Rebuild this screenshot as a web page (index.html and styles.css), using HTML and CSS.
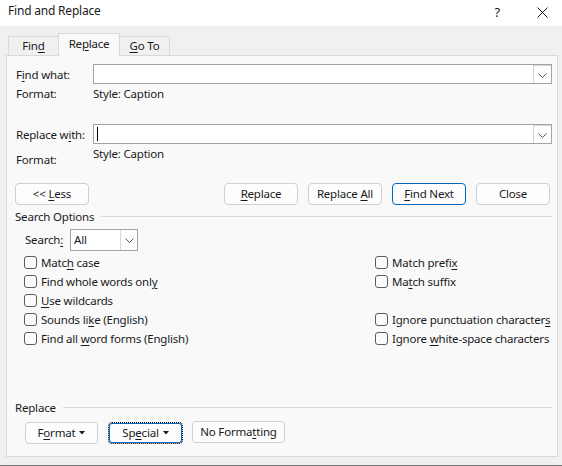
FILE: index.html
```html
<!DOCTYPE html>
<html>
<head>
<meta charset="utf-8">
<title>Find and Replace</title>
<link rel="stylesheet" href="styles.css">
</head>
<body>
<div class="window">
  <div class="titlebar">
    <span class="title">Find and Replace</span>
    <div class="ctrls">
      <span class="help">?</span>
      <svg class="close" width="11" height="11" viewBox="0 0 11 11"><path d="M0.5 0.5 L10.5 10.5 M10.5 0.5 L0.5 10.5" stroke="#1a1a1a" stroke-width="1" fill="none"/></svg>
    </div>
  </div>
  <div class="tabs">
    <div class="tab t-find"><span>Fin<u>d</u></span></div>
    <div class="tab t-replace active"><span>Re<u>p</u>lace</span></div>
    <div class="tab t-goto"><span><u>G</u>o To</span></div>
  </div>
  <div class="panel">
    <div class="field-row r-find">
      <span class="lbl">F<u>i</u>nd what:</span>
      <div class="combo">
        <span class="combo-text"></span>
        <span class="drop"><svg width="9" height="5" viewBox="0 0 9 5"><path d="M0.5 0.5 L4.5 4.5 L8.5 0.5" stroke="#5a5a5a" stroke-width="1" fill="none"/></svg></span>
      </div>
    </div>
    <div class="fmt-row f1">
      <span class="lbl">Format:</span>
      <span class="val">Style: Caption</span>
    </div>
    <div class="field-row r-repl">
      <span class="lbl">Replace w<u>i</u>th:</span>
      <div class="combo">
        <span class="combo-text"><span class="caret"></span></span>
        <span class="drop"><svg width="9" height="5" viewBox="0 0 9 5"><path d="M0.5 0.5 L4.5 4.5 L8.5 0.5" stroke="#5a5a5a" stroke-width="1" fill="none"/></svg></span>
      </div>
    </div>
    <div class="fmt-row f2">
      <span class="lbl">Format:</span>
      <span class="val">Style: Caption</span>
    </div>
    <div class="btn-row">
      <button class="btn"><span>&lt;&lt; <u>L</u>ess</span></button>
      <div class="btn-group">
        <button class="btn"><span><u>R</u>eplace</span></button>
        <button class="btn"><span>Replace <u>A</u>ll</span></button>
        <button class="btn default"><span><u>F</u>ind Next</span></button>
        <button class="btn"><span>Close</span></button>
      </div>
    </div>
    <div class="section-head">
      <span>Search Options</span><span class="rule"></span>
    </div>
    <div class="search-row">
      <span class="search-lbl">Search<u>:</u></span>
      <div class="select">
        <span class="select-text">All</span>
        <span class="drop"><svg width="9" height="5" viewBox="0 0 9 5"><path d="M0.5 0.5 L4.5 4.5 L8.5 0.5" stroke="#5a5a5a" stroke-width="1" fill="none"/></svg></span>
      </div>
    </div>
    <div class="options">
      <label class="opt"><span class="cb"></span><span>Matc<u>h</u> case</span></label>
      <label class="opt"><span class="cb"></span><span>Match prefi<u>x</u></span></label>
      <label class="opt"><span class="cb"></span><span>Find whole words onl<u>y</u></span></label>
      <label class="opt"><span class="cb"></span><span>Ma<u>t</u>ch suffix</span></label>
      <label class="opt"><span class="cb"></span><span><u>U</u>se wildcards</span></label>
      <div class="opt empty"></div>
      <label class="opt"><span class="cb"></span><span>Sounds li<u>k</u>e (English)</span></label>
      <label class="opt"><span class="cb"></span><span>Ignore punctuation character<u>s</u></span></label>
      <label class="opt"><span class="cb"></span><span>Find all <u>w</u>ord forms (English)</span></label>
      <label class="opt"><span class="cb"></span><span>Ignore <u>w</u>hite-space characters</span></label>
    </div>
    <div class="bottom">
      <div class="section-head sh2">
        <span>Replace</span><span class="rule"></span>
      </div>
      <div class="bottom-btns">
        <button class="btn b-format"><span>F<u>o</u>rmat</span><svg class="tri" width="6" height="4" viewBox="0 0 6 4"><path d="M0 0 L6 0 L3 3.5 Z" fill="#1a1a1a"/></svg></button>
        <button class="btn b-special focus"><span>Sp<u>e</u>cial</span><svg class="tri" width="6" height="4" viewBox="0 0 6 4"><path d="M0 0 L6 0 L3 3.5 Z" fill="#1a1a1a"/></svg></button>
        <button class="btn b-nofmt"><span>No Forma<u>t</u>ting</span></button>
      </div>
    </div>
  </div>
</div>
</body>
</html>
```

FILE: styles.css
```css
* { box-sizing: border-box; }
html, body {
  margin: 0;
  padding: 0;
}
body {
  width: 562px;
  height: 466px;
  overflow: hidden;
  background: #f0f0f0;
  font-family: "Noto Sans", "Open Sans", sans-serif;
  font-size: 11.5px;
  letter-spacing: -0.2px;
  color: #1a1a1a;
}
u { text-decoration: underline; text-underline-offset: 2px; text-decoration-thickness: 1px; }

.window {
  width: 562px;
  height: 466px;
  border-bottom: 1px solid #707070;
  display: flex;
  flex-direction: column;
}

.titlebar {
  height: 26px;
  background: #ffffff;
  display: flex;
  align-items: flex-start;
  justify-content: space-between;
}
.title {
  padding: 3px 0 0 8px;
  line-height: 16px;
  font-size: 12px;
}
.ctrls {
  display: flex;
  align-items: flex-start;
  padding-top: 4px;
}
.help {
  font-size: 13px;
  line-height: 16px;
  margin-right: 37px;
}
.close {
  margin-top: 3px;
  margin-right: 14px;
}

.tabs {
  height: 29px;
  display: flex;
  align-items: flex-end;
  padding-left: 8px;
}
.tab {
  height: 19px;
  border: 1px solid #d9d9d9;
  border-bottom: none;
  background: #f0f0f0;
  display: flex;
  align-items: center;
  justify-content: center;
  padding-bottom: 1px;
  line-height: 16px;
}
.t-find { width: 51px; }
.t-replace { width: 62px; margin-left: -1px; }
.t-goto { width: 51px; margin-left: -1px; }
.tab.active {
  height: 23px;
  margin-bottom: -1px;
  background: #f9f9f9;
  position: relative;
  z-index: 1;
  padding-bottom: 3px;
}

.panel {
  margin-left: 6px;
  width: 552px;
  height: 402px;
  background: #f9f9f9;
  border: 1px solid #d9d9d9;
  padding: 8px 5px 0 8px;
  display: flex;
  flex-direction: column;
}

.field-row {
  display: flex;
  align-items: center;
  height: 20px;
}
.lbl {
  width: 78px;
  padding-left: 1px;
  line-height: 19px;
  flex: none;
}
.combo {
  flex: 1;
  height: 20px;
  border: 1px solid #a3a3a3;
  background: #ffffff;
  display: flex;
  justify-content: space-between;
}
.combo-text {
  flex: 1;
  position: relative;
}
.caret {
  position: absolute;
  left: 3px;
  top: 2px;
  width: 1px;
  height: 14px;
  background: #000;
}
.drop {
  width: 18px;
  flex: none;
  border: 1px solid #d4d4d4;
  border-bottom: none;
  border-right: none;
  display: flex;
  align-items: center;
  justify-content: center;
  background: #fdfdfd;
}
.drop svg { display: block; margin-top: 1px; }

.fmt-row {
  display: flex;
  line-height: 19px;
}
.f1 { height: 20px; }
.r-repl { margin-top: 20px; }
.f2 .lbl { margin-top: 6px; }

.btn-row {
  margin-top: 14px;
  display: flex;
  justify-content: space-between;
  padding-right: 2px;
}
.btn-group { display: flex; gap: 10px; }
.btn {
  font-family: inherit;
  font-size: 11.5px;
  letter-spacing: -0.2px;
  color: #1a1a1a;
  width: 74px;
  height: 22px;
  padding: 0 0 1px 0;
  margin: 0;
  background: #fdfdfd;
  border: 1px solid #d0d0d0;
  border-radius: 4px;
  line-height: 18px;
  display: flex;
  align-items: center;
  justify-content: center;
}
.btn.default {
  border-color: #0067c0;
}

.section-head {
  margin-top: 2px;
  height: 18px;
  line-height: 17px;
  display: flex;
  align-items: center;
}
.rule {
  flex: 1;
  height: 1px;
  background: #d9d9d9;
  margin-left: 7px;
}

.search-row {
  margin-top: 4px;
  display: flex;
  align-items: center;
  padding-left: 10px;
  height: 22px;
}
.search-lbl { width: 45px; line-height: 20px; }
.select {
  width: 68px;
  height: 22px;
  border: 1px solid #a3a3a3;
  background: #ffffff;
  display: flex;
}
.select-text {
  flex: 1;
  padding-left: 3px;
  line-height: 19px;
}
.select .drop {
  border-top: none;
  width: 17px;
}

.options {
  margin-top: 2px;
  padding-left: 9px;
  display: grid;
  grid-template-columns: 351px 1fr;
  grid-auto-rows: 19px;
}
.opt {
  display: flex;
  align-items: center;
  white-space: nowrap;
  line-height: 17px;
}
.cb {
  width: 13px;
  height: 13px;
  border: 1px solid #5c5c5c;
  border-radius: 3px;
  background: #fcfcfc;
  margin-right: 4px;
  flex: none;
}

.bottom {
  margin-top: auto;
  padding-bottom: 12px;
}
.sh2 { margin-top: 0; height: 17px; }
.sh2 .rule { margin-left: 7px; }
.bottom-btns {
  margin-top: 6px;
  padding-left: 10px;
  display: flex;
}
.b-format { width: 73px; }
.b-special { width: 75px; margin-left: 10px; }
.b-nofmt { width: 93px; margin-left: 9px; margin-top: -1px; }
.btn.focus {
  border: 1px dotted #000;
  box-shadow: inset 0 0 0 1px #0067c0;
}
.tri { margin-left: 4px; display: block; margin-top: 1px; }
```
